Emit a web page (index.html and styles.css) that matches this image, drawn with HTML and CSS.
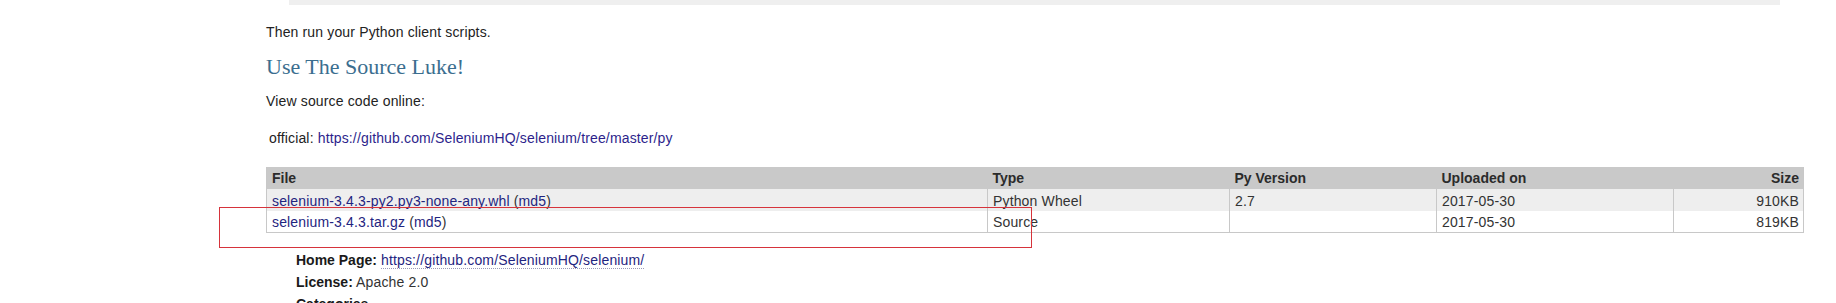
FILE: index.html
```html
<!DOCTYPE html>
<html lang="en">
<head>
  <meta charset="UTF-8">
  <title>selenium 3.4.3</title>
  <link rel="stylesheet" href="styles.css">
</head>
<body>
  <div class="section">
    <pre class="code-tail"></pre>

    <p class="run-note">Then run your Python client scripts.</p>

    <h2>Use The Source Luke!</h2>

    <p>View source code online:</p>

    <p class="source-link">official: <a href="#">https://github.com/SeleniumHQ/selenium/tree/master/py</a></p>

    <table class="files">
      <colgroup>
        <col class="c-file">
        <col class="c-type">
        <col class="c-pyver">
        <col class="c-date">
        <col class="c-size">
      </colgroup>
      <thead>
        <tr>
          <th>File</th>
          <th>Type</th>
          <th>Py Version</th>
          <th>Uploaded on</th>
          <th class="num">Size</th>
        </tr>
      </thead>
      <tbody>
        <tr class="odd">
          <td><a href="#">selenium-3.4.3-py2.py3-none-any.whl</a> (<a href="#">md5</a>)</td>
          <td>Python Wheel</td>
          <td>2.7</td>
          <td>2017-05-30</td>
          <td class="num">910KB</td>
        </tr>
        <tr>
          <td><a href="#">selenium-3.4.3.tar.gz</a> (<a href="#">md5</a>)</td>
          <td>Source</td>
          <td></td>
          <td>2017-05-30</td>
          <td class="num">819KB</td>
        </tr>
      </tbody>
    </table>

    <ul class="meta">
      <li><strong>Home Page:</strong> <a class="dotted" href="#">https://github.com/SeleniumHQ/selenium/</a></li>
      <li><strong>License:</strong> Apache 2.0</li>
      <li><strong>Categories</strong></li>
    </ul>

    <div class="mark"></div>
  </div>
</body>
</html>
```

FILE: styles.css
```css
* {
  box-sizing: border-box;
}
body {
  margin: 0;
  background: #fff;
  font-family: 'Liberation Sans', Arial, sans-serif;
  font-size: 14px;
  line-height: 18px;
  letter-spacing: 0.15px;
  color: #222;
  overflow: hidden;
}
.section {
  position: relative;
  margin-left: 266px;
  width: 1537px;
}
a {
  color: #1f2580;
  text-decoration: none;
}
p {
  margin: 0;
}
.code-tail {
  margin: 0 23px;
  height: 5px;
  background: #efefef;
}
.run-note {
  margin-top: 18px;
}
h2 {
  margin: 12px 0 0;
  font-family: 'Liberation Serif', 'Times New Roman', serif;
  font-size: 22px;
  line-height: 28px;
  letter-spacing: 0;
  font-weight: normal;
  color: #3b6e8f;
}
h2 + p {
  margin-top: 11px;
}
.source-link {
  margin-top: 19px;
  padding-left: 3px;
}
.source-link a {
  color: #2d1f8c;
}

/* downloads table */
.files {
  margin-top: 20px;
  width: 1537px;
  border-collapse: collapse;
  table-layout: fixed;
  border: 1px solid #c8c8c8;
  border-top: none;
  color: #333;
}
.c-file { width: 721px; }
.c-type { width: 242px; }
.c-pyver { width: 207px; }
.c-date { width: 237px; }
.c-size { width: 130px; }
.files th {
  background: #c9c9c9;
  text-align: left;
  font-weight: bold;
  padding: 2px 5px 2px 5px;
  height: 22px;
  color: #2b2b2b;
  letter-spacing: 0;
}
.files td {
  padding: 2px 5px 1px 5px;
  height: 21px;
  border-left: 1px solid #c8c8c8;
  white-space: nowrap;
}
.files tr.odd td {
  background: #eee;
  height: 22px;
}
.files .num {
  text-align: right;
  padding-right: 4px;
}

/* package details */
.meta {
  list-style: none;
  margin: 16px 0 0;
  padding-left: 30px;
  line-height: 22px;
  color: #333;
}
.meta strong {
  color: #1a1a1a;
  letter-spacing: 0;
}
.dotted {
  border-bottom: 1px dotted #9a9ab8;
}

/* review marker drawn over the second download row */
.mark {
  position: absolute;
  left: -47px;
  top: 207px;
  width: 813px;
  height: 41px;
  border: 1px solid #d6333b;
  pointer-events: none;
}
```
